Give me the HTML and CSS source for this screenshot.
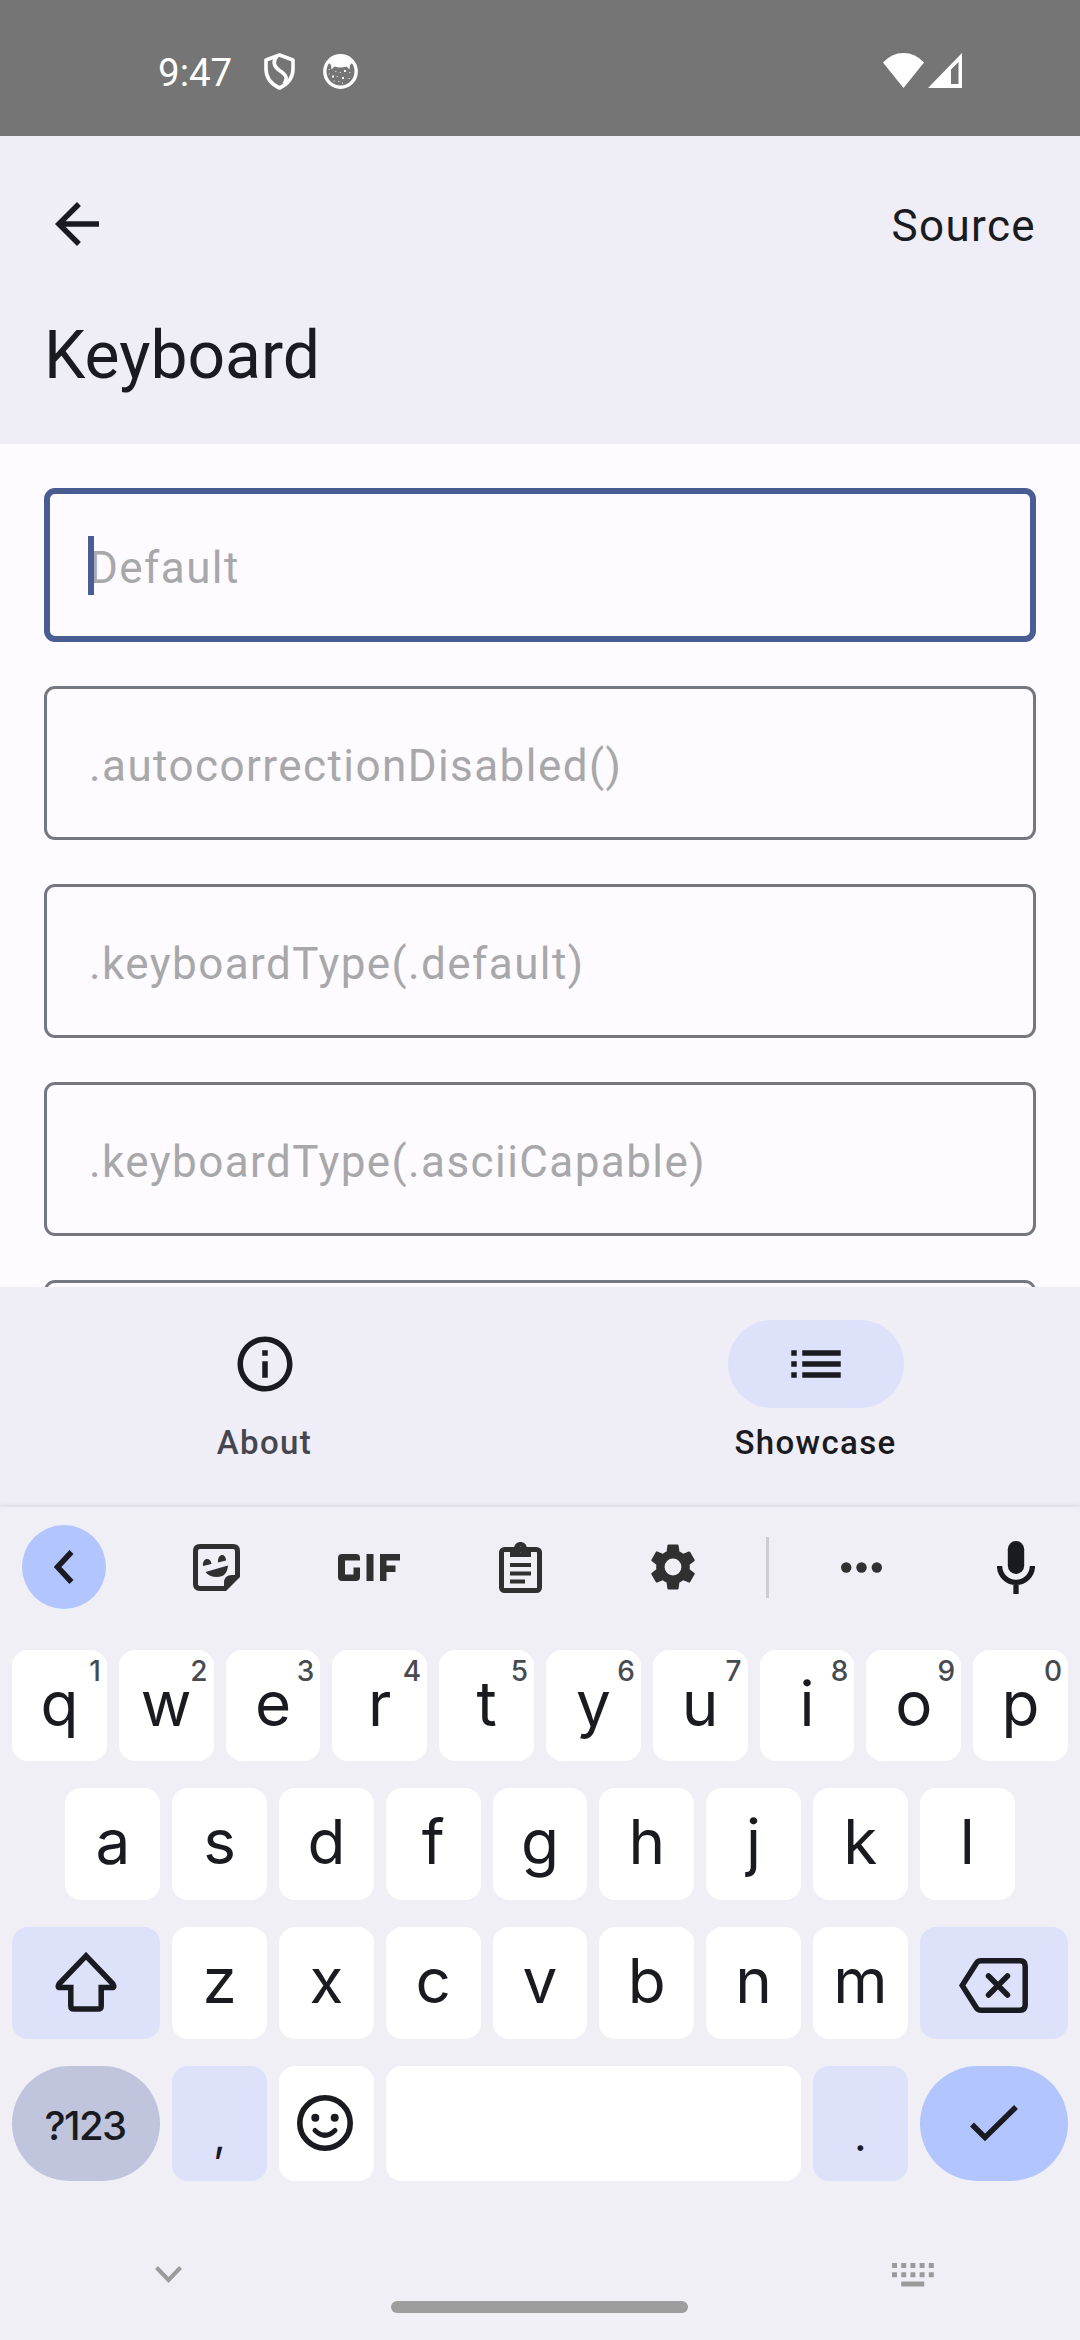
FILE: index.html
```html
<!DOCTYPE html>
<html lang="en">
<head>
<meta charset="utf-8">
<title>Keyboard</title>
<link rel="stylesheet" href="styles.css">
</head>
<body>
<div class="screen">
  <div class="status">
    <span class="clock">9:47</span>
    <svg class="shield" width="31" height="37" viewBox="0 0 31 37" fill="none" stroke="#fff" stroke-width="3.6" stroke-linejoin="round"><path d="M15.500 2 L29 7 V16 C29 25 23 31.500 15.500 35 C8 31.500 2 25 2 16 V7 Z"/><path d="M13 3 C8.500 8 9.500 13.500 15.500 17.500 C22.500 22 24 25 20 31"/></svg>
    <svg class="face" width="35" height="35" viewBox="0 0 35 35"><circle cx="17.500" cy="17.500" r="15.700" fill="none" stroke="#fff" stroke-width="3.400"/><path d="M5 8 Q17.500 -3 30 8 L27 11 L26.500 15.500 L23.500 12.500 Q17.500 14.500 11.500 12.500 L8.500 15.500 L8 11 Z" fill="#fff"/><g fill="#fff"><rect x="9" y="21.500" width="2" height="2"/><rect x="21" y="16" width="2" height="2"/><rect x="19" y="23" width="2" height="2"/><g opacity=".6"><rect x="12" y="17" width="1.500" height="1"/><rect x="16.500" y="18" width="1.500" height="1"/><rect x="26" y="18" width="1.500" height="1"/><rect x="5.500" y="15" width="1.500" height="1"/><rect x="5.500" y="19.500" width="1.500" height="1"/><rect x="13.500" y="22" width="1.500" height="1"/><rect x="25.500" y="24" width="1.500" height="1"/><rect x="15" y="27" width="1.500" height="1"/><rect x="10.500" y="26.500" width="1.500" height="1"/><rect x="19" y="28.500" width="1" height="1.500"/></g></g></svg>
    <span class="grow"></span>
    <svg width="41" height="35" viewBox="0 0 41 35"><path d="M0 9.500 Q8.500 0 20.500 0 T41 9.500 L20.500 35 Z" fill="#fff"/></svg>
    <svg class="signal" width="34" height="35" viewBox="0 0 34 35"><path fill-rule="evenodd" d="M34 0 V35 H0 Z M30.500 9 L23 16.500 V31 H30.500 Z" fill="#fff"/></svg>
  </div>

  <header class="appbar">
    <div class="toolbar">
      <svg width="66" height="66" viewBox="0 0 24 24"><path d="M20 11H7.830l5.590-5.590L12 4l-8 8 8 8 1.410-1.410L7.830 13H20v-2z" fill="#1a1b20"/></svg>
      <span class="source">Source</span>
    </div>
    <h1 class="title">Keyboard</h1>
  </header>

  <main class="fields">
    <div class="field focused">Default<span class="caret"></span></div>
    <div class="field">.autocorrectionDisabled()</div>
    <div class="field">.keyboardType(.default)</div>
    <div class="field">.keyboardType(.asciiCapable)</div>
    <div class="field"></div>
  </main>

  <nav class="tabs">
    <div class="tab">
      <span class="pill"><svg width="66" height="66" viewBox="0 0 24 24"><path d="M11 7h2v2h-2zm0 4h2v6h-2zm1-9C6.480 2 2 6.480 2 12s4.480 10 10 10 10-4.480 10-10S17.520 2 12 2zm0 18c-4.410 0-8-3.590-8-8s3.590-8 8-8 8 3.590 8 8-3.590 8-8 8z"/></svg></span>
      <span class="label">About</span>
    </div>
    <div class="tab selected">
      <span class="pill"><svg width="66" height="66" viewBox="0 0 24 24"><path d="M3 13h2v-2H3v2zm0 4h2v-2H3v2zm0-8h2V7H3v2zm4 4h14v-2H7v2zm0 4h14v-2H7v2zM7 7v2h14V7H7z"/></svg></span>
      <span class="label">Showcase</span>
    </div>
  </nav>

  <section class="keyboard">
    <div class="tools">
      <span class="tool collapse"><svg width="20" height="34" viewBox="0 0 20 34" fill="none" stroke="#1a1b20" stroke-width="5.500"><path d="M17.500 2 L3.500 17 L17.500 32"/></svg></span>
      <span class="tool"><svg width="47" height="47" viewBox="0 0 47 47"><path d="M7 2.500 H40 Q44.500 2.500 44.500 7 V32 L32 44.500 H7 Q2.500 44.500 2.500 40 V7 Q2.500 2.500 7 2.500 Z" fill="none" stroke="#303030" stroke-width="5"/><path d="M31 46 V39 Q31 31 39 31 H46 Z M12.500 28 L35 21.500 Q34 33 24 33 Q16 33 12.500 28 Z M10 22 C9 13 18 13 18.500 20 Z M25 18.500 C24.500 9 33 9 33 16.500 Z" fill="#303030"/></svg></span>
      <span class="tool"><svg width="62" height="27" viewBox="0 0 62 27" fill="#303030"><path d="M4 0 H18 Q22 0 22 4 V6.500 H7 V20.500 H15.500 V13.500 H22 V23 Q22 27 18 27 H4 Q0 27 0 23 V4 Q0 0 4 0 Z"/><rect x="28.500" width="7" height="27"/><path d="M42 0 H62 V6.500 H48.500 V11.500 H57.500 V18 H48.500 V27 H42 Z"/></svg></span>
      <span class="tool"><svg width="43" height="51" viewBox="0 0 43 51"><rect x="2.500" y="7.500" width="38" height="41" rx="3" fill="none" stroke="#303030" stroke-width="5"/><path fill-rule="evenodd" d="M11 6 H15 C16 -2 27 -2 28 6 H32 V15 H11 Z M21.500 4.700 A2.800 2.800 0 1 0 21.500 10.300 A2.800 2.800 0 1 0 21.500 4.700 Z M11 21 H32 V25 H11 Z M11 29.500 H32 V33.500 H11 Z M11 37.500 H26 V41.500 H11 Z" fill="#303030"/></svg></span>
      <span class="tool"><svg width="56" height="56" viewBox="0 0 24 24"><path d="M19.140 12.940c.04-.3.060-.61.060-.94 0-.32-.02-.64-.07-.94l2.030-1.580c.18-.14.230-.41.120-.61l-1.920-3.320c-.12-.22-.37-.29-.59-.22l-2.390.96c-.5-.38-1.030-.7-1.620-.94L14.400 2.810c-.04-.24-.24-.41-.48-.41h-3.840c-.24 0-.43.170-.47.410l-.36 2.540c-.59.240-1.130.570-1.620.940l-2.390-.96c-.22-.08-.47 0-.59.220L2.740 8.870c-.12.210-.08.470.12.610l2.030 1.580c-.05.300-.09.630-.09.940s.02.640.07.940l-2.030 1.580c-.18.140-.23.410-.12.610l1.920 3.320c.12.220.37.290.59.220l2.390-.96c.5.380 1.030.700 1.620.940l.36 2.540c.05.240.24.410.48.410h3.840c.24 0 .44-.17.470-.41l.36-2.540c.59-.24 1.130-.56 1.620-.94l2.390.96c.22.080.47 0 .59-.22l1.920-3.320c.12-.22.070-.47-.12-.61l-2.010-1.580zM12 15.600A3.600 3.600 0 1 1 12 8.400a3.600 3.600 0 0 1 0 7.200z" fill="#303030"/></svg></span>
      <span class="divider"></span>
      <span class="tool more"><svg width="41" height="11" viewBox="0 0 41 11" fill="#303030"><circle cx="5.200" cy="5.500" r="5.200"/><circle cx="20.500" cy="5.500" r="5.200"/><circle cx="35.800" cy="5.500" r="5.200"/></svg></span>
      <span class="tool mic"><svg width="38" height="53" viewBox="0 0 38 53"><rect x="10.800" y="0" width="16.400" height="33" rx="8.200" fill="#1a1b20"/><path d="M2.600 25 A16.400 16.400 0 0 0 35.400 25 M19 42 V53" fill="none" stroke="#1a1b20" stroke-width="5.300"/></svg></span>
    </div>

    <div class="keys">
      <div class="row first">
        <div class="key">q<span class="hint">1</span></div><div class="key">w<span class="hint">2</span></div><div class="key">e<span class="hint">3</span></div><div class="key">r<span class="hint">4</span></div><div class="key">t<span class="hint">5</span></div><div class="key">y<span class="hint">6</span></div><div class="key">u<span class="hint">7</span></div><div class="key">i<span class="hint">8</span></div><div class="key">o<span class="hint">9</span></div><div class="key">p<span class="hint">0</span></div>
      </div>
      <div class="row second">
        <div class="key">a</div><div class="key">s</div><div class="key">d</div><div class="key">f</div><div class="key">g</div><div class="key">h</div><div class="key">j</div><div class="key">k</div><div class="key">l</div>
      </div>
      <div class="row">
        <div class="key wide tint"><svg class="shift" width="62" height="60" viewBox="0 0 62 60" fill="none" stroke="#1a1b20" stroke-width="5.500"><path d="M31 3.800 L4 32 Q2 35.500 5 35.500 H15.800 V54 Q15.800 57 18.800 57 H43.200 Q46.200 57 46.200 54 V35.500 H57 Q60 35.500 58 32 Z"/></svg></div>
        <div class="key">z</div><div class="key">x</div><div class="key">c</div><div class="key">v</div><div class="key">b</div><div class="key">n</div><div class="key">m</div>
        <div class="key wide tint"><svg class="bksp" width="69" height="55" viewBox="0 0 69 55" fill="none" stroke="#1a1b20" stroke-width="5.500"><path d="M3.200 27.500 L17.500 5 Q19 2.800 22 2.800 H61 Q66.200 2.800 66.200 8 V47 Q66.200 52.200 61 52.200 H22 Q19 52.200 17.500 50 Z"/><path d="M29.500 18 L48.500 37 M48.500 18 L29.500 37" stroke-linecap="round"/></svg></div>
      </div>
      <div class="row last">
        <div class="key wide symbols">?123</div>
        <div class="key tint punct">,</div>
        <div class="key emoji"><svg width="56" height="56" viewBox="0 0 56 56" fill="none" stroke="#1a1b20"><circle cx="28" cy="28" r="25.200" stroke-width="5.600"/><path d="M18 35.500 Q28 45 38 35.500" stroke-width="5" stroke-linecap="round"/><circle cx="18.300" cy="22.700" r="4" fill="#1a1b20" stroke="none"/><circle cx="37.700" cy="22.700" r="4" fill="#1a1b20" stroke="none"/></svg></div>
        <div class="key space"></div>
        <div class="key tint punct">.</div>
        <div class="key wide enter"><svg width="48" height="37" viewBox="0 0 48 37" fill="none" stroke="#1a1b20" stroke-width="5.500"><path d="M2 19.500 L15 32.500 L46 2"/></svg></div>
      </div>
    </div>

    <div class="sysnav">
      <svg class="hide" width="27" height="17" viewBox="0 0 27 17" fill="none" stroke="#9b9b9b" stroke-width="4"><path d="M1.500 1.500 L13.500 14 L25.500 1.500"/></svg>
      <span class="home"></span>
      <svg class="switch" width="42" height="24" viewBox="0 0 42 24" fill="#9b9b9b"><path d="M0 0h5v5H0z M9.200 0h5v5h-5z M18.400 0h5v5h-5z M27.600 0h5v5h-5z M36.800 0h5v5h-5z M0 9.200h5v5H0z M9.200 9.200h5v5h-5z M18.400 9.200h5v5h-5z M27.600 9.200h5v5h-5z M36.800 9.200h5v5h-5z M9.200 18.500h23v5h-23z"/></svg>
    </div>
  </section>
</div>
</body>
</html>
```
FILE: styles.css
```css
* { box-sizing: border-box; }
body { margin: 0; font-family: Roboto, "Liberation Sans", sans-serif; color: #1a1b20; }
svg { display: block; flex: none; }
.screen { width: 1080px; height: 2340px; display: flex; flex-direction: column; overflow: hidden; background: #fdfbff; }

.status { height: 136px; flex: none; background: #757575; display: flex; align-items: flex-start; padding: 53px 118px 0 158px; color: #fff; }
.clock { width: 106px; font-size: 38.5px; line-height: 39px; }
.face { margin: 1px 0 0 28px; }
.grow { flex: 1; }
.signal { margin-left: 4px; }

.appbar { height: 308px; flex: none; background: #efedf6; padding: 55px 44px 0; }
.toolbar { display: flex; justify-content: space-between; align-items: center; height: 66px; }
.source { font-size: 44px; letter-spacing: 1.375px; line-height: 66px; padding-top: 3px; }
.title { margin: 55px 0 0; font-weight: 400; font-size: 66px; line-height: 88px; }

.fields { height: 843px; flex: none; overflow: hidden; display: flex; flex-direction: column; gap: 44px; padding: 44px 44px 0; }
.field { position: relative; flex: none; height: 154px; border: 3px solid #757780; border-radius: 11px; padding: 5px 42px 0; display: flex; align-items: center; font-size: 44px; letter-spacing: 1.43px; color: #a8a8ab; }
.focused { border: 6px solid #495d92; padding: 5px 39px 0; }
.caret { position: absolute; left: 38px; top: 42px; width: 6px; height: 59px; background: #495d92; }

.tabs { height: 220px; flex: none; background: #efedf6; display: flex; gap: 22px; padding-top: 33px; }
.tab { flex: 1; display: flex; flex-direction: column; align-items: center; gap: 13px; color: #45464f; }
.pill { width: 176px; height: 88px; border-radius: 44px; display: flex; align-items: center; justify-content: center; }
.pill svg { fill: #1a1b20; }
.selected { color: #1a1b20; }
.selected .pill { background: #dde1f9; }
.label { font-size: 33px; font-weight: 500; line-height: 44px; letter-spacing: 1.375px; }

.keyboard { position: relative; flex: 1; background: #f0eff6; box-shadow: 0 -1px 6px rgba(0, 0, 0, .1); display: flex; flex-direction: column; }
.tools { height: 143px; flex: none; display: grid; grid-template-columns: 128px 177px 127px 177px 127px 33px 185px 124px; padding-bottom: 23px; align-items: center; }
.tool { display: flex; justify-content: center; }
.collapse { width: 84px; height: 84px; margin-left: 22px; border-radius: 50%; background: #b2c5ff; align-items: center; padding-right: 1px; }
.divider { width: 3px; height: 61px; background: #cdccd2; justify-self: end; }

.keys { padding: 0 12px; display: flex; flex-direction: column; gap: 27px; font-family: Inter, "Open Sans", sans-serif; }
.row { display: flex; gap: 12px; height: 112px; }
.first { height: 111px; }
.second { padding: 0 53.4px; }
.last { height: 115px; }
.key { position: relative; width: 94.8px; flex: none; background: #fff; border-radius: 16px; display: flex; align-items: center; justify-content: center; padding-bottom: 5px; font-size: 62px; }
.hint { position: absolute; right: 6px; top: 6px; font-size: 28px; font-weight: 500; line-height: 30px; color: #474a4f; }
.wide { width: 148.2px; }
.space { width: 415.2px; }
.tint { background: #dde1f9; }
.symbols { background: #c0c5dd; border-radius: 58px; font-size: 40px; font-weight: 500; letter-spacing: -1.6px; padding: 4px 2px 0 0; }
.enter { background: #b2c5ff; border-radius: 58px; padding: 0; }
.punct { font-size: 44px; padding: 23px 0 0; }
.shift { margin-top: 2px; }
.bksp { margin-top: 9px; }
.emoji { padding: 0 2px 1px 0; }

.sysnav { flex: 1; display: grid; grid-template-columns: 391px 297px 392px; padding-top: 82px; align-items: start; }
.hide { margin: 3px 0 0 155px; }
.home { height: 12px; border-radius: 6px; background: #9d9d9e; margin-top: 38px; }
.switch { margin-left: 204px; }
```
